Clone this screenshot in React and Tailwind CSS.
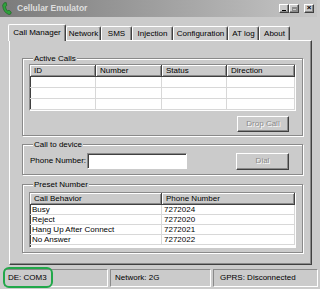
import React from "react";

const raised =
  "border border-t-white border-l-white border-r-[#404040] border-b-[#404040] shadow-[inset_-1px_-1px_0_#8a8a8a]";
const sunken =
  "border border-t-[#8a8a8a] border-l-[#8a8a8a] border-r-white border-b-white shadow-[inset_1px_1px_0_#404040]";
const etched =
  "border border-[#8a8a8a] shadow-[1px_1px_0_#fff,inset_1px_1px_0_#fff]";
const headCell =
  "h-[12px] flex items-center pl-[4px] border-r border-b border-[#404040] shadow-[inset_1px_1px_0_#fff,inset_-1px_-1px_0_#8a8a8a] bg-[#cbcbcb]";

const tabs = [
  { label: "Call Manager", w: "w-[58px]", active: true },
  { label: "Network", w: "w-[35px]" },
  { label: "SMS", w: "w-[31px]" },
  { label: "Injection", w: "w-[41px]" },
  { label: "Configuration", w: "w-[55px]" },
  { label: "AT log", w: "w-[31px]" },
  { label: "About", w: "w-[31px]" },
];

const presets = [
  ["Busy", "7272024"],
  ["Reject", "7272020"],
  ["Hang Up After Connect", "7272021"],
  ["No Answer", "7272022"],
];

function Tab({ label, w, active }) {
  if (active) {
    return (
      <div
        className={`${w} h-[17px] -mb-[1px] relative z-10 bg-[#cbcbcb] border-t border-l border-r border-t-white border-l-white border-r-[#404040] shadow-[inset_-1px_0_0_#8a8a8a] rounded-t-[2px] flex items-center justify-center pb-[1px]`}
      >
        {label}
      </div>
    );
  }
  return (
    <div
      className={`${w} h-[14px] bg-[#cbcbcb] border-t border-l border-r border-t-white border-l-white border-r-[#404040] shadow-[inset_-1px_0_0_#8a8a8a] rounded-t-[2px] flex items-center justify-center`}
    >
      {label}
    </div>
  );
}

function GroupBox({ title, className, children }) {
  return (
    <fieldset className={`${etched} w-[281px] px-[6px] ${className}`}>
      <legend className="ml-[4px] px-[1px] leading-[9px] bg-[#cbcbcb]">
        {title}
      </legend>
      {children}
    </fieldset>
  );
}

function PhoneIcon() {
  return (
    <svg width="10" height="13" viewBox="0 0 10 13">
      <path
        d="M2.2 0.8 L4.2 0.6 L4.8 3.6 L3.4 4.6 Q3.8 7.4 5.6 9 L7 8.2 L9.2 10 L8.8 12 L7 12.6 Q1.2 10.6 0.6 3.2 Z"
        fill="#2fa23c"
        stroke="#16601f"
        strokeWidth="0.6"
      />
    </svg>
  );
}

function WinButton({ children }) {
  return (
    <div className={`${raised} w-[10px] h-[9px] bg-[#cbcbcb] flex items-center justify-center`}>
      {children}
    </div>
  );
}

export default function App() {
  return (
    <div className="w-[320px] h-[289px] bg-[#cbcbcb] relative overflow-hidden font-['Liberation_Sans',Arial,sans-serif] text-[8px] text-black flex flex-col">
      {/* title bar */}
      <div className="w-[317px] h-[17px] bg-linear-to-r from-[#7b7b7b] to-[#c6c6c6] flex items-center pl-[2px] pr-[3px]">
        <PhoneIcon />
        <span className="ml-[5px] text-[8.5px] font-bold text-[#dedede]">
          Cellular Emulator
        </span>
        <div className="ml-auto flex items-center">
          <WinButton>
            <div className="w-[4px] h-[1px] bg-black mt-[4px] -ml-[1px]" />
          </WinButton>
          <WinButton>
            <div className="w-[5px] h-[4px] border border-[#8a8a8a] border-t-2" />
          </WinButton>
          <div className="ml-[5px]">
            <WinButton>
              <span className="text-[8px] leading-none font-bold -mt-[1px]">×</span>
            </WinButton>
          </div>
        </div>
      </div>

      {/* tab strip */}
      <div className="mt-[7px] ml-[8px] h-[16px] flex items-end">
        {tabs.map((t) => (
          <Tab key={t.label} {...t} />
        ))}
      </div>

      {/* tab page */}
      <div className="ml-[9px] w-[303px] h-[225px] border-l border-t border-white border-r border-b border-r-[#404040] border-b-[#404040] shadow-[inset_-1px_-1px_0_#8a8a8a] pl-[12px] pt-[13px] flex flex-col">
        <GroupBox title="Active Calls">
          <div className={`${sunken} mt-[1px] h-[47px] bg-white overflow-hidden`}>
            <div className="grid grid-cols-[66px_66px_65px_1fr]">
              <div className={headCell}>ID</div>
              <div className={headCell}>Number</div>
              <div className={headCell}>Status</div>
              <div className={headCell}>Direction</div>
              {Array.from({ length: 16 }).map((_, i) => (
                <div key={i} className="h-[11px] border-r border-b border-[#d8d8d8]" />
              ))}
            </div>
          </div>
          <div className="flex justify-end mt-[5px] pb-[3px]">
            <div className={`${raised} w-[52px] h-[16px] mr-[7px] flex items-center justify-center text-[#8a8a8a] [text-shadow:1px_1px_0_#fff]`}>
              Drop Call
            </div>
          </div>
        </GroupBox>

        <GroupBox title="Call to device" className="mt-[4px]">
          <div className="mt-[3px] h-[18px] pb-[0px] flex items-center">
            <span className="w-[58px] pl-[1px]">Phone Number:</span>
            <div className={`${sunken} w-[100px] h-[16px] bg-white`} />
            <div className={`${raised} ml-auto mr-[7px] w-[53px] h-[17px] flex items-center justify-center text-[#8a8a8a] [text-shadow:1px_1px_0_#fff]`}>
              Dial
            </div>
          </div>
          <div className="h-[4px]" />
        </GroupBox>

        <GroupBox title="Preset Number" className="mt-[5px]">
          <div className={`${sunken} mt-[3px] h-[56px] bg-white overflow-hidden`}>
            <div className="grid grid-cols-[132px_1fr]">
              <div className={headCell}>Call Behavior</div>
              <div className={headCell}>Phone Number</div>
              {presets.map(([b, n]) => (
                <React.Fragment key={b}>
                  <div className="h-[10px] pl-[2px] leading-[10px] border-r border-b border-[#d8d8d8]">
                    {b}
                  </div>
                  <div className="h-[10px] pl-[2px] leading-[10px] border-r border-b border-[#d8d8d8]">
                    {n}
                  </div>
                </React.Fragment>
              ))}
            </div>
          </div>
          <div className="h-[4px]" />
        </GroupBox>
      </div>

      {/* status bar */}
      <div className="mt-[4px] pl-[4px] flex gap-[2px]">
        <div className="w-[104px] h-[18px] border border-t-[#8a8a8a] border-l-[#8a8a8a] border-r-white border-b-white flex items-center pl-[3px]">
          DE: COM3
        </div>
        <div className="w-[101px] h-[18px] border border-t-[#8a8a8a] border-l-[#8a8a8a] border-r-white border-b-white flex items-center pl-[4px]">
          Network: 2G
        </div>
        <div className="w-[105px] h-[18px] border border-t-[#8a8a8a] border-l-[#8a8a8a] border-r-white border-b-white flex items-center pl-[6px]">
          GPRS: Disconnected
        </div>
      </div>

      {/* green highlight annotation */}
      <div className="absolute left-[3px] top-[267px] w-[50px] h-[21px] border-2 border-[#22a84a] rounded-[6px]" />
    </div>
  );
}
